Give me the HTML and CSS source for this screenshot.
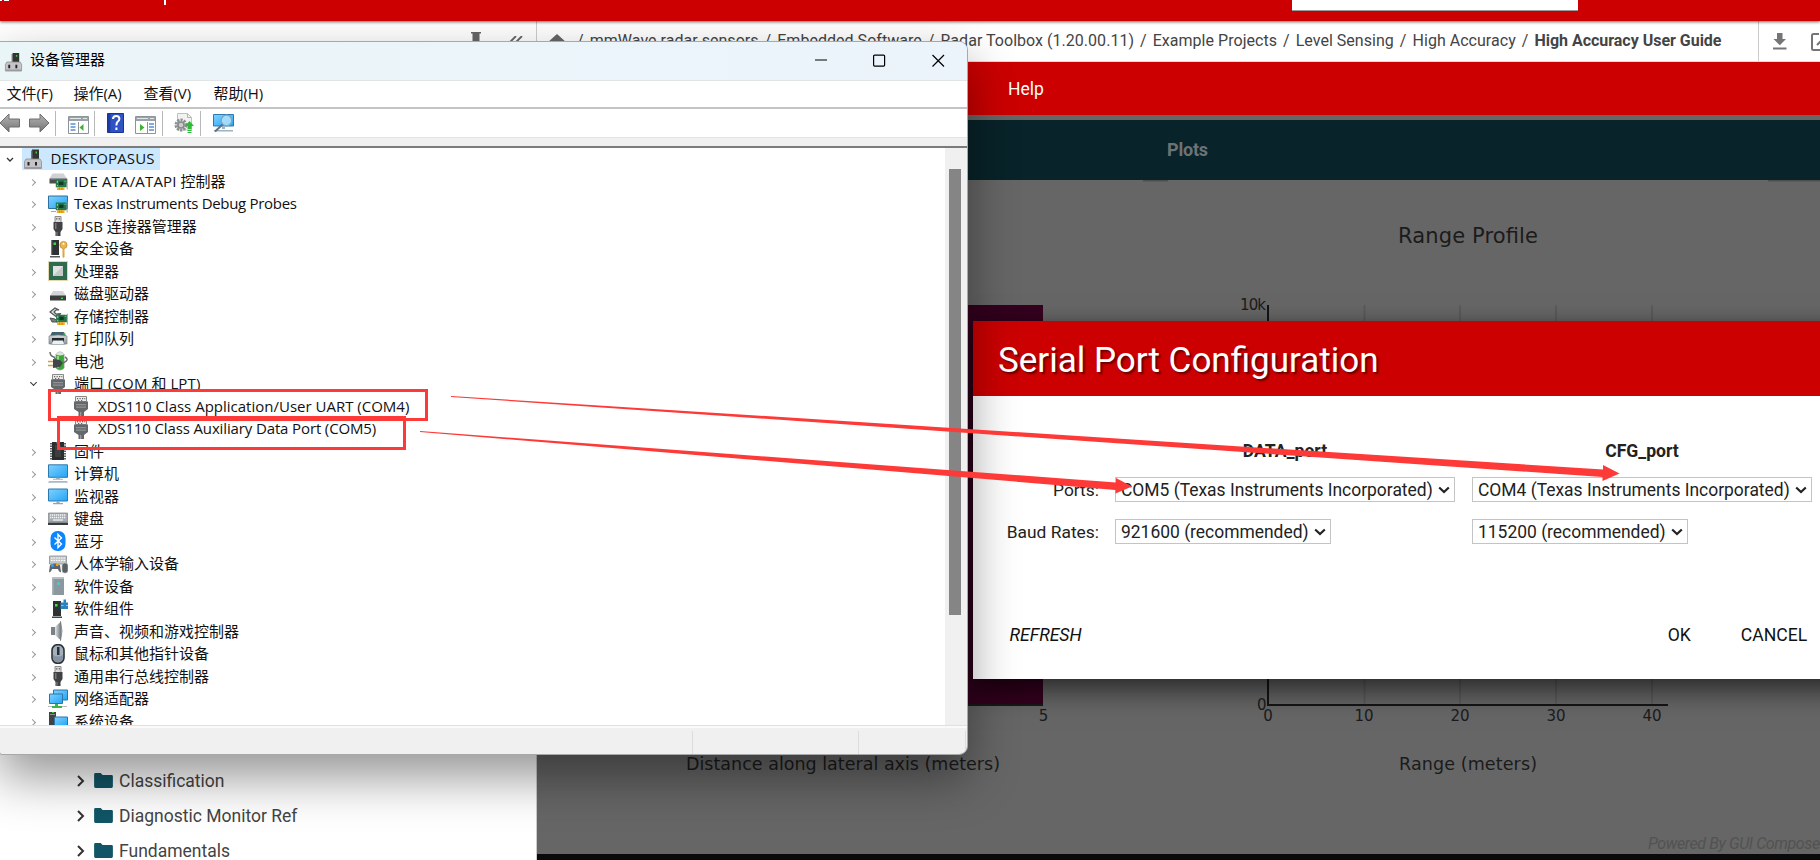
FILE: index.html
```html
<!DOCTYPE html>
<html lang="zh-CN">
<head>
<meta charset="utf-8">
<title>High Accuracy User Guide</title>
<link rel="stylesheet" href="styles.css">
</head>
<body>
<svg class="defs" width="0" height="0" aria-hidden="true">
  <defs>
    <linearGradient id="gScreen" x1="0" y1="0" x2="1" y2="1"><stop offset="0" stop-color="#7fd2ff"/><stop offset="1" stop-color="#22a4f5"/></linearGradient>
    <linearGradient id="gSteel" x1="0" y1="0" x2="1" y2="0"><stop offset="0" stop-color="#e4e8ea"/><stop offset="1" stop-color="#6d7478"/></linearGradient>
    <linearGradient id="gGrey" x1="0" y1="0" x2="0" y2="1"><stop offset="0" stop-color="#d9dcde"/><stop offset="1" stop-color="#8d9396"/></linearGradient>
    <linearGradient id="gArrow" x1="0" y1="0" x2="0" y2="1"><stop offset="0" stop-color="#b5b5b5"/><stop offset="1" stop-color="#747474"/></linearGradient>
  </defs>
  <symbol id="pc" viewBox="0 0 20 20"><path d="M9 .500h7v11H9z" fill="#333"/><path d="M8 1.500h1.500v9H8z" fill="#777"/><path d="M12.500 2.500h1.500v2h-1.500z" fill="#36d23a"/><path d="M3 10h14l1.500 2.500v7h-17v-7z" fill="#c4c4c8" stroke="#8d8d91" stroke-width=".8"/><path d="M4.500 13h2v3.500h-2zM12 13h2v3.500h-2z" fill="#222"/><path d="M2 18h16v1.500H2z" fill="#9a9a9f"/></symbol>
  <symbol id="card" viewBox="0 0 12 11"><path d="M1 1h10v7H1z" fill="#27764a"/><path d="M4 3h4v3H4z" fill="#123b26"/><path d="M2 2h1v2H2zM9 2h1v1H9zM2 6h1v1H2z" fill="#8ad29e"/><path d="M2 8h7v2.500H2z" fill="#f5ad19"/><path d="M4.300 8v2.500M6.600 8v2.500" stroke="#b97800" stroke-width=".6"/><path d="M11 0h.8v10H11z" fill="#999"/></symbol>
  <symbol id="ide" viewBox="0 0 20 20"><path d="M4.500 2.500h11l3.500 5H1.500z" fill="#cfd2d4"/><path d="M1.500 7.500H19v5H1.500z" fill="#4b4e50"/><path d="M2.500 7.500h15v1h-15z" fill="#8c8f91"/><use href="#card" x="6.500" y="7.500" width="13.500" height="12"/></symbol>
  <symbol id="probe" viewBox="0 0 20 20"><path d="M.5 2h19v12.500H.5z" fill="url(#gScreen)" stroke="#2f6fa0"/><path d="M3 17h5v1H3z" fill="#9ab"/><use href="#card" x="6.500" y="7.500" width="13.500" height="12"/></symbol>
  <symbol id="usb" viewBox="0 0 20 20"><path d="M7 .5h6v6H7z" fill="#d9d9d9" stroke="#8a8a8a"/><path d="M8.300 2h1v1.500h-1zM10.800 2h1v1.500h-1z" fill="#555"/><path d="M5.500 6h9v7l-2 3v4h-5v-4l-2-3z" fill="#3f4143"/><path d="M7 7h1.500v6H7z" fill="#77797b"/><path d="M8.500 16h1v4h-1z" fill="#888"/></symbol>
  <symbol id="security" viewBox="0 0 20 20"><path d="M3 1h8v15H3z" fill="#2f3234"/><path d="M3 1h1.200v15H3z" fill="#74787a"/><path d="M2 17h10v1.500H2z" fill="#55595b"/><path d="M5.500 3.500h2.500V6H5.500z" fill="#3bd93e"/><circle cx="15.500" cy="6" r="3.600" fill="#e9b652" stroke="#b98624" stroke-width=".7"/><circle cx="15.500" cy="4.800" r="1" fill="#fff"/><path d="M14.500 9h2v9l-1 1-1-1z" fill="#dca740"/></symbol>
  <symbol id="cpu" viewBox="0 0 20 20"><path d="M.5.500h19v19H.5z" fill="none" stroke="#c8b05c" stroke-width="1" stroke-dasharray="1 1"/><path d="M1 1h18v18H1z" fill="#2f6b4c"/><path d="M5 5h10v10H5z" fill="#dfe3e1"/><path d="M15 5v10H5z" fill="#c3cac7"/></symbol>
  <symbol id="disk" viewBox="0 0 20 20"><path d="M5 7h10l3 5H2z" fill="#d3d5d7"/><path d="M2 11.500h16v5H2z" fill="#3b3d3f"/><path d="M13 13.500h2v1.500h-2z" fill="#37d63b"/></symbol>
  <symbol id="storage" viewBox="0 0 20 20"><path d="M2 6l5-4 4 2-3 0-2 2 2 2 5-.5-5 3z" fill="#dfe2e3" stroke="#505456" stroke-width="1.200"/><path d="M2 12l5 1 3 3H4z" fill="#777c7e" stroke="#505456"/><use href="#card" x="7" y="7.500" width="13" height="12"/></symbol>
  <symbol id="printer" viewBox="0 0 20 20"><path d="M4 3h12l2 4H2z" fill="#40626e"/><path d="M1 7q9-2 18 0v8H1z" fill="url(#gGrey)" stroke="#7e8487" stroke-width=".7"/><path d="M4 9h12v4H4z" fill="#25282a"/><path d="M5 11.500h10l1.500 4h-13z" fill="#e8f2f6" stroke="#80888b" stroke-width=".5"/><path d="M15.500 4h2v1.500h-2z" fill="#35dd49"/></symbol>
  <symbol id="battery" viewBox="0 0 20 20"><path d="M8 3q4-4 8 0v14q-4 4-8 0z" fill="#37a836" stroke="#8b918b" stroke-width=".8"/><ellipse cx="12" cy="2.800" rx="4" ry="1.700" fill="#dce3dc"/><path d="M9 5h2v12H9z" fill="#8ae27d"/><path d="M2 1q0 4 4 5l2 3M17 6q5 3-2 6" fill="none" stroke="#6b6e70" stroke-width="1.500"/><path d="M5 8l7 1 3 3-3 4-7 1z" fill="#434648"/><path d="M0 10.500h5M0 14.500h5" stroke="#c9a24a" stroke-width="1.500"/></symbol>
  <symbol id="port" viewBox="0 0 20 20"><path d="M4.500.500h11v5h-11z" fill="#ececec" stroke="#888"/><path d="M6 2h1.200v1.200H6zM8.500 2h1.200v1.200H8.500zM11 2h1.200v1.200H11zM13.300 2h1v1.200h-1zM7 4h1.200v1H7zM10 4h1.200v1H10z" fill="#666"/><path d="M3 5.500h14V13l-4 3v4H7.500v-4L3 13z" fill="#65686a"/><path d="M5 8h10v1.200H5zM5 10.500h10v1.200H5z" fill="#8f9294"/><path d="M9 16h1.300v4H9z" fill="#999"/></symbol>
  <symbol id="firmware" viewBox="0 0 20 20"><path d="M3.500 2v17M16.500 2v17" stroke="#606366" stroke-width="3" stroke-dasharray="1.500 1"/><path d="M4 1h12v18H4z" fill="#2b2d2f"/><path d="M7 4h6v12H7z" fill="#3c3f41"/><path d="M8.500 1h3v1.500h-3z" fill="#999"/></symbol>
  <symbol id="computer" viewBox="0 0 20 20"><path d="M.5.800h19v12.500H.5z" fill="url(#gScreen)" stroke="#2f78ad"/><path d="M8 13.800h4v1H8zM5 14.800h10v1H5z" fill="#9fb2c0"/><path d="M1 17h18l1 1.800H0z" fill="#a9b8c4"/></symbol>
  <symbol id="monitor" viewBox="0 0 20 20"><path d="M.5 3h19v12H.5z" fill="url(#gScreen)" stroke="#2f78ad"/><path d="M8.500 15.500h3v1.500h-3zM5 17h10v1.200H5z" fill="#8fa6b7"/></symbol>
  <symbol id="keyboard" viewBox="0 0 20 20"><path d="M.5 4h19v9H.5z" fill="#a7adb2" stroke="#7d8387" stroke-width=".7"/><path d="M2 6h16M2 8.500h16" stroke="#f3f5f6" stroke-width="1.300" stroke-dasharray="1.300 .7"/><path d="M5 11h10" stroke="#f3f5f6" stroke-width="1.200"/><path d="M0 13.500h20V16H0z" fill="#363c40"/></symbol>
  <symbol id="bluetooth" viewBox="0 0 20 20"><rect x="2.500" y="0" width="15" height="20" rx="7" fill="#0a84ff"/><path d="M6.500 6.500l7 6.500-3.500 3.500v-13L13.500 7l-7 6.500" fill="none" stroke="#fff" stroke-width="1.400"/></symbol>
  <symbol id="hid" viewBox="0 0 20 20"><path d="M1.500 2h17v8h-17z" fill="#c3c8cb" stroke="#858b8f" stroke-width=".8"/><path d="M3 4h14M3 6.500h14" stroke="#fff" stroke-width="1.200" stroke-dasharray="1.500 1"/><path d="M1 18l1-7q5-3 10 0l1 7q-2 1-3-3H4q-1 4-3 3z" fill="#5d6468"/><circle cx="4.500" cy="11.500" r="1.500" fill="#359ff1"/><circle cx="9.200" cy="10.800" r="1.400" fill="#f6a321"/><rect x="14" y="9" width="6" height="10" rx="2.800" fill="#596065" stroke="#b8bec2" stroke-width=".7"/></symbol>
  <symbol id="softdev" viewBox="0 0 20 20"><path d="M5 1h10l1 1v17H4V2z" fill="#8c989f"/><path d="M5 1h10l1 2H4z" fill="#b7c0c4"/><path d="M4 3h1.500v16H4z" fill="#a9b3b8"/><path d="M9 6.500h3V9H9z" fill="#38d0dc"/></symbol>
  <symbol id="softcomp" viewBox="0 0 20 20"><path d="M5 2h8v15H5z" fill="#2f3234"/><path d="M4 17.500h10V19H4z" fill="#444749"/><path d="M7 5h2.500v2.500H7z" fill="#42e03f"/><path d="M12.500 3.500h7.500v2.500h-7.500zM12.500 6.500h7.500v3.500h-7.500zM15.500.500h2.500v9h-2.500z" fill="#2b83bd"/></symbol>
  <symbol id="sound" viewBox="0 0 20 20"><path d="M3 6h4v8H3z" fill="#7b8185"/><path d="M7 6l6-5.500v19L7 14z" fill="url(#gSteel)"/><path d="M12.500.500q3 9.500 0 19z" fill="#b8bec2" stroke="#757c80" stroke-width=".8"/></symbol>
  <symbol id="mouse" viewBox="0 0 20 20"><rect x="4" y=".7" width="12" height="18.600" rx="5.500" fill="#a3afbd" stroke="#2e3336" stroke-width="1.600"/><path d="M9 3h2.500v8H9z" fill="#2b3033"/><path d="M5 11q5 3 10 0v3q-1 4-5 4t-5-4z" fill="#8492a3"/></symbol>
  <symbol id="network" viewBox="0 0 20 20"><path d="M5.500 1h14v10h-14z" fill="url(#gScreen)" stroke="#2c75aa"/><path d="M1.500 5h13v9.500h-13z" fill="url(#gScreen)" stroke="#2c75aa"/><path d="M7 15h3v2h4v2H4v-2h3z" fill="#39b54a"/><path d="M0 17h4v1H0zM14 17h5v1h-5z" fill="#bbb"/></symbol>
  <symbol id="system" viewBox="0 0 20 20"><path d="M1 1h7v14H1z" fill="#3f4345"/><path d="M2 3h5v1H2z" fill="#8a9092"/><path d="M4 1h2v1H4z" fill="#3c3"/><path d="M6.500 6h13v9h-13z" fill="url(#gScreen)" stroke="#2c75aa"/></symbol>
  <symbol id="folder" viewBox="0 0 20 16"><path d="M1.500 0H7l2 2h9.500q1.500 0 1.500 1.500v11q0 1.500-1.500 1.500h-17Q0 16 0 14.500v-13Q0 0 1.500 0z" fill="#115566"/></symbol>
</svg>

<div class="page">
  <header class="topbar">
    <span class="mark mark-a"></span><span class="mark mark-b"></span><span class="mark mark-c"></span>
    <div class="search"></div>
  </header>
  <div class="crumbbar">
    <div class="sidetools">
      <svg width="12" height="20" viewBox="0 0 12 20"><path d="M1 0h10v1.500H9.500V10L12 13H0l2.500-3V1.500H1z" fill="#666"/></svg>
      <svg class="collapse" width="14" height="14" viewBox="0 0 14 14"><path d="M7 0L1 6l6 6M13 0L7 6l6 6" fill="none" stroke="#666" stroke-width="1.800"/></svg>
    </div>
    <nav class="crumbs">
      <svg class="home" width="20" height="17" viewBox="0 0 20 17"><path d="M10 0L0 9h3v8h5v-6h4v6h5V9h3z" fill="#666"/></svg>
      <i>/</i><span>mmWave radar sensors</span><i>/</i><span>Embedded Software</span><i>/</i><span>Radar Toolbox (1.20.00.11)</span><i>/</i><span>Example Projects</span><i>/</i><span>Level Sensing</span><i>/</i><span>High Accuracy</span><i>/</i><b>High Accuracy User Guide</b>
    </nav>
    <div class="pagetools">
      <svg width="14" height="17" viewBox="0 0 14 17"><path d="M4 0h5.500v6H13l-6.200 6.200L.5 6H4zM0 14.500h13.500v2H0z" fill="#757575"/></svg>
      <svg width="18" height="18" viewBox="0 0 18 18"><path d="M8 1H2.500Q1 1 1 2.500v13Q1 17 2.500 17h13M6 12L16 2M11 1h6v6" fill="none" stroke="#757575" stroke-width="2"/></svg>
    </div>
  </div>
  <div class="content">
    <aside class="sidebar">
      <div class="nav"><svg width="8" height="12" viewBox="0 0 8 12"><path d="M1 1l5 5-5 5" fill="none" stroke="#333" stroke-width="2"/></svg><svg width="19" height="15"><use href="#folder"/></svg>Classification</div>
      <div class="nav"><svg width="8" height="12" viewBox="0 0 8 12"><path d="M1 1l5 5-5 5" fill="none" stroke="#333" stroke-width="2"/></svg><svg width="19" height="15"><use href="#folder"/></svg>Diagnostic Monitor Ref</div>
      <div class="nav"><svg width="8" height="12" viewBox="0 0 8 12"><path d="M1 1l5 5-5 5" fill="none" stroke="#333" stroke-width="2"/></svg><svg width="19" height="15"><use href="#folder"/></svg>Fundamentals</div>
    </aside>
    <main class="app">
      <div class="appmenu">Help</div>
      <div class="tabs"><span>Plots</span></div>
      <svg class="plots" width="1283" height="674" viewBox="537 180 1283 674">
        <path d="M1143 180h25v1.500h-25zM1768 180h52v1.500h-52z" fill="#4e4e4e"/>
        <rect x="600" y="305" width="443" height="399" fill="#35001f"/>
        <path d="M600 704h443v2H600z" fill="#191919"/>
        <path d="M1364.500 305v399M1460 305v399M1556 305v399M1652 305v399" stroke="#5b5b5b" stroke-width="2"/>
        <path d="M1268 305v400h400" fill="none" stroke="#151515" stroke-width="2"/>
        <g class="ticks">
          <text x="1043.500" y="721" text-anchor="middle">5</text>
          <text x="1266" y="309.500" text-anchor="end" textLength="26">10k</text>
          <text x="1266.500" y="709.500" text-anchor="end">0</text>
          <text x="1268" y="721" text-anchor="middle">0</text>
          <text x="1364" y="721" text-anchor="middle">10</text>
          <text x="1460" y="721" text-anchor="middle">20</text>
          <text x="1556" y="721" text-anchor="middle">30</text>
          <text x="1652" y="721" text-anchor="middle">40</text>
        </g>
        <text class="ptitle" x="1398" y="242.500" textLength="140">Range Profile</text>
        <text class="axis" x="686" y="770" textLength="314">Distance along lateral axis (meters)</text>
        <text class="axis" x="1399" y="770" textLength="138">Range (meters)</text>
        <text class="powered" x="1648" y="849" textLength="177">Powered By GUI Composer</text>
      </svg>
    </main>
  </div>
</div>

<section class="dialog">
  <h1>Serial Port Configuration</h1>
  <div class="form">
    <span></span><b>DATA_port</b><b>CFG_port</b>
    <label>Ports:</label>
    <div class="select wide">COM5 (Texas Instruments Incorporated)<svg width="12" height="8" viewBox="0 0 12 8"><path d="M1.200 1.500L6 6l4.800-4.500" fill="none" stroke="#222" stroke-width="2.200"/></svg></div>
    <div class="select wide">COM4 (Texas Instruments Incorporated)<svg width="12" height="8" viewBox="0 0 12 8"><path d="M1.200 1.500L6 6l4.800-4.500" fill="none" stroke="#222" stroke-width="2.200"/></svg></div>
    <label>Baud Rates:</label>
    <div class="select">921600 (recommended)<svg width="12" height="8" viewBox="0 0 12 8"><path d="M1.200 1.500L6 6l4.800-4.500" fill="none" stroke="#222" stroke-width="2.200"/></svg></div>
    <div class="select">115200 (recommended)<svg width="12" height="8" viewBox="0 0 12 8"><path d="M1.200 1.500L6 6l4.800-4.500" fill="none" stroke="#222" stroke-width="2.200"/></svg></div>
  </div>
  <div class="actions"><em>REFRESH</em><span class="ok">OK</span><span class="cancel">CANCEL</span></div>
</section>

<section class="window">
  <div class="titlebar">
    <svg class="ticon" width="19" height="20"><use href="#pc"/></svg><span class="tname">设备管理器</span>
    <svg class="controls" width="130" height="14" viewBox="0 0 130 14"><path d="M0 6h12" stroke="#000" stroke-width="1.200"/><rect x="58.600" y="1.100" width="11" height="11" rx="1" fill="none" stroke="#000" stroke-width="1.200"/><path d="M117.500 1l11.500 11.500M129 1l-11.500 11.500" stroke="#000" stroke-width="1.200"/></svg>
  </div>
  <div class="menubar"><span>文件(F)</span><span>操作(A)</span><span>查看(V)</span><span>帮助(H)</span></div>
  <div class="toolbar">
    <svg width="20" height="20" viewBox="0 0 20 20"><path d="M0 10L9 1v5h10.500v8H9v5z" fill="url(#gArrow)" stroke="#6e6e6e"/></svg>
    <svg class="fwd" width="20" height="20" viewBox="0 0 20 20"><path d="M20 10L11 1v5H.5v8H11v5z" fill="url(#gArrow)" stroke="#6e6e6e"/></svg>
    <i class="sep s1"></i>
    <svg class="b1" width="21" height="18" viewBox="0 0 21 18"><path d="M.5.500h20v17H.5z" fill="#fff" stroke="#8c949a"/><path d="M1 1h19v4H1z" fill="#9aa3aa"/><path d="M2 2.500h11M15 2.500h4" stroke="#dfe4e7"/><path d="M10.500 6v11" stroke="#8c949a"/><path d="M2.500 8h5M2.500 11h5M2.500 14h5" stroke="#5a8fd0" stroke-width="1.500"/><path d="M15.500 8v7L11.500 11.500z" fill="#3ab52d"/></svg>
    <i class="sep s2"></i>
    <svg class="b2" width="17" height="20" viewBox="0 0 17 20"><path d="M.5.500h16v19H.5z" fill="#2f52c4" stroke="#1b348c"/><path d="M1 1h2.500v18H1z" fill="#1e3ca5"/><path d="M6 6q0-3 3.200-3t3.200 2.800q0 1.700-1.800 3Q9.400 10 9.400 12.500M9.400 14.500V17" fill="none" stroke="#fff" stroke-width="2"/></svg>
    <svg class="b3" width="21" height="18" viewBox="0 0 21 18"><path d="M.5.500h20v17H.5z" fill="#fff" stroke="#8c949a"/><path d="M1 1h19v4H1z" fill="#9aa3aa"/><path d="M2 2.500h11M15 2.500h4" stroke="#dfe4e7"/><path d="M12.500 6v11" stroke="#8c949a"/><path d="M14 8h5M14 11h5M14 14h5" stroke="#5a8fd0" stroke-width="1.500"/><path d="M5 8v7l4.500-3.500z" fill="#3ab52d"/></svg>
    <i class="sep s3"></i>
    <svg class="b4" width="20" height="20" viewBox="0 0 20 20"><path d="M3.500.500h10l4 4V17h-14z" fill="#f2f2f2" stroke="#c0c0c0"/><path d="M13.500.500v4h4" fill="none" stroke="#b5b5b5"/><circle cx="7" cy="12" r="5" fill="none" stroke="#8d9192" stroke-width="3" stroke-dasharray="2.200 1"/><circle cx="7" cy="12" r="3" fill="#ccc" stroke="#85898a" stroke-width="1.500"/><path d="M15.500 8l4.500 5h-2.500v3h-4v-3H11zM13.500 17h4v1h-4zM13.500 19h4v1h-4z" fill="#2dbb35"/></svg>
    <i class="sep s4"></i>
    <svg class="b5" width="21" height="20" viewBox="0 0 21 20"><path d="M.5 1.500h20V13H.5z" fill="url(#gScreen)" stroke="#2f78ad"/><path d="M9 14h3v2H9zM1 17h19v1.500H1z" fill="#9fb2c0"/><circle cx="13.500" cy="7.500" r="5.300" fill="#bde8ff" fill-opacity=".75" stroke="#7fa6bf" stroke-width="1.300"/><path d="M9.500 11.500L2 18.500" stroke="#5d7385" stroke-width="2"/></svg>
  </div>
  <div class="strip"></div>
  <div class="pane">
    <div class="tree">
      <div class="row root"><svg class="ch" viewBox="0 0 8 8"><path d="M1 2l3 3 3-3" fill="none" stroke="#333" stroke-width="1.300"/></svg><span class="sel"><svg class="ic"><use href="#pc"/></svg><span class="lat wide">DESKTOPASUS</span></span></div>
      <div class="row"><u></u><svg class="ic"><use href="#ide"/></svg><span class="lat wide">IDE ATA/ATAPI</span>&nbsp;控制器</div>
      <div class="row"><u></u><svg class="ic"><use href="#probe"/></svg><span class="lat tight">Texas Instruments Debug Probes</span></div>
      <div class="row"><u></u><svg class="ic"><use href="#usb"/></svg><span class="lat">USB</span>&nbsp;连接器管理器</div>
      <div class="row"><u></u><svg class="ic"><use href="#security"/></svg>安全设备</div>
      <div class="row"><u></u><svg class="ic"><use href="#cpu"/></svg>处理器</div>
      <div class="row"><u></u><svg class="ic"><use href="#disk"/></svg>磁盘驱动器</div>
      <div class="row"><u></u><svg class="ic"><use href="#storage"/></svg>存储控制器</div>
      <div class="row"><u></u><svg class="ic"><use href="#printer"/></svg>打印队列</div>
      <div class="row"><u></u><svg class="ic"><use href="#battery"/></svg>电池</div>
      <div class="row"><u class="open"></u><svg class="ic"><use href="#port"/></svg>端口&nbsp;<span class="lat wide">(COM</span>&nbsp;和&nbsp;<span class="lat wide">LPT)</span></div>
      <div class="row child"><svg class="ic"><use href="#port"/></svg><span class="lat">XDS110 Class Application/User UART (COM4)</span></div>
      <div class="row child"><svg class="ic"><use href="#port"/></svg><span class="lat snug">XDS110 Class Auxiliary Data Port (COM5)</span></div>
      <div class="row"><u></u><svg class="ic"><use href="#firmware"/></svg>固件</div>
      <div class="row"><u></u><svg class="ic"><use href="#computer"/></svg>计算机</div>
      <div class="row"><u></u><svg class="ic"><use href="#monitor"/></svg>监视器</div>
      <div class="row"><u></u><svg class="ic"><use href="#keyboard"/></svg>键盘</div>
      <div class="row"><u></u><svg class="ic"><use href="#bluetooth"/></svg>蓝牙</div>
      <div class="row"><u></u><svg class="ic"><use href="#hid"/></svg>人体学输入设备</div>
      <div class="row"><u></u><svg class="ic"><use href="#softdev"/></svg>软件设备</div>
      <div class="row"><u></u><svg class="ic"><use href="#softcomp"/></svg>软件组件</div>
      <div class="row"><u></u><svg class="ic"><use href="#sound"/></svg>声音、视频和游戏控制器</div>
      <div class="row"><u></u><svg class="ic"><use href="#mouse"/></svg>鼠标和其他指针设备</div>
      <div class="row"><u></u><svg class="ic"><use href="#usb"/></svg>通用串行总线控制器</div>
      <div class="row"><u></u><svg class="ic"><use href="#network"/></svg>网络适配器</div>
      <div class="row"><u></u><svg class="ic"><use href="#system"/></svg>系统设备</div>
    </div>
    <div class="scroll"><div class="thumb"></div></div>
  </div>
  <div class="status"><i></i><i></i><i></i></div>
</section>

<svg class="notes" width="1820" height="860" viewBox="0 0 1820 860">
  <g fill="none" stroke="#fd3a37" stroke-width="3"><rect x="49.500" y="390.500" width="377" height="29"/><rect x="58.500" y="417.500" width="346" height="31"/></g>
  <path d="M451 396L1603 469.500V465L1619.500 473.500 1602.500 481V477L451 397z" fill="#fd3a37"/>
  <path d="M420 431L1116 482.500V478L1132 486.500 1115.500 493.500V490L420 432z" fill="#fd3a37"/>
</svg>
</body>
</html>
```

FILE: styles.css
```css
* { box-sizing: border-box; }
body { margin: 0; width: 1820px; height: 860px; overflow: hidden; position: relative; background: #fff; font-family: Roboto, "Noto Sans CJK SC", sans-serif; color: #333; }
svg { display: block; flex: none; }
.defs { position: absolute; }
i { font-style: normal; }

.page { width: 1820px; height: 860px; display: flex; flex-direction: column; }
.topbar { height: 21px; flex: none; background: #c00; position: relative; z-index: 1; box-shadow: 0 1px 3px rgba(0,0,0,.6); padding-left: 1292px; }
.search { width: 286px; height: 11px; background: #fff; border-bottom: 1px solid #999; }
.mark { position: absolute; top: 0; background: #fff; }
.mark-a { left: 0; width: 2px; height: 1px; }
.mark-b { left: 4px; width: 5px; height: 1px; }
.mark-c { left: 164px; width: 2px; height: 5px; }
.crumbbar { height: 41px; flex: none; display: flex; border-bottom: 1px solid #ddd; background: #fff; }
.sidetools { width: 537px; border-right: 1px solid #ccc; padding: 11px 0 0 470px; display: flex; }
.collapse { margin: 4px 0 0 27px; }
.crumbs { width: 1222px; border-right: 1px solid #ccc; display: flex; align-items: center; font-size: 16px; color: #444; white-space: nowrap; padding: 0 0 2px 10px; letter-spacing: .03px; }
.crumbs i { width: 18.700px; text-align: center; }
.crumbs .home { margin: 4px 4px 0 0; }
.crumbs b { font-weight: 700; letter-spacing: -.02px; }
.pagetools { display: flex; padding: 12px 0 0 14px; gap: 24px; overflow: hidden; flex: 1; }
.content { flex: 1; display: flex; min-height: 0; }
.sidebar { width: 537px; flex: none; border-right: 1px solid #ccc; padding-top: 701px; overflow: hidden; }
.nav { height: 35px; display: flex; align-items: center; font-size: 17.500px; color: #444; padding-left: 77px; }
.nav svg + svg { margin: 0 6px 0 9px; }
.app { flex: 1; background: #666; border-bottom: 6px solid #0a0a0a; overflow: hidden; }
.appmenu { height: 53px; background: #c00; color: #fff; font-size: 17.500px; line-height: 54px; padding-left: 471px; }
.tabs { height: 60px; margin-top: 5px; background: #082329; line-height: 60px; padding-left: 630px; font-size: 18px; font-weight: 700; color: #6d7375; letter-spacing: -.2px; }
.plots text { font-family: "DejaVu Sans", sans-serif; fill: #1b1b1b; }
.plots .ticks text { font-size: 15px; }
.plots .ptitle { font-size: 21px; }
.plots .axis { font-size: 17.500px; }
.plots .powered { font-family: Roboto, sans-serif; font-style: italic; font-size: 16px; fill: #525252; }

.dialog { position: absolute; left: 973px; top: 321px; width: 920px; height: 358px; background: #fff; box-shadow: 0 12px 26px rgba(0,0,0,.55), 0 0 14px rgba(0,0,0,.15); color: #222; }
.dialog h1 { margin: 0; height: 75px; background: #c00; color: #fff; font-size: 35px; font-weight: 400; line-height: 80px; padding-left: 25px; text-shadow: 2px 2px 2px rgba(0,0,0,.5); white-space: nowrap; }
.form { display: grid; grid-template-columns: 127px 340px 340px; grid-template-rows: 20px 25px 25px; gap: 17px; padding-top: 44px; margin-left: -2px; font-size: 17.600px; line-height: 20px; }
.form b { text-align: center; line-height: 22px; }
.form label { text-align: right; line-height: 26px; font-size: 17.400px; margin-right: -1px; }
.select { width: 216px; height: 25px; border: 1px solid #c4c4c4; padding-left: 5px; display: flex; align-items: center; gap: 5px; white-space: nowrap; font-size: 17.450px; }
.select.wide { width: 340px; }
.actions { display: flex; align-items: center; font-size: 17.600px; padding: 80px 0 0 36.500px; line-height: 22px; color: #111; }
.ok { margin-left: 586px; }
.cancel { margin-left: 50px; }

.window { position: absolute; left: -1px; top: 41px; width: 969px; height: 714px; border: 1px solid #a6a8a9; border-radius: 0 9px 9px 3px; overflow: hidden; background: #f0f0f0; display: flex; flex-direction: column; font: 15px/22px "Open Sans", "Noto Sans CJK SC", sans-serif; color: #111; box-shadow: 0 22px 50px rgba(0,0,0,.42); }
.titlebar { height: 39px; flex: none; display: flex; align-items: center; background: linear-gradient(90deg,#eaf5f8,#ecf4fb); border-bottom: 1px solid #e2e5e6; }
.ticon { margin: 1px 7px 0 4px; }
.tname { color: #000; line-height: 20px; margin-top: -4px; }
.controls { margin: 0 0 0 710px; }
.menubar { height: 28px; flex: none; display: flex; background: #fff; border-bottom: 2px solid #c4c4c6; padding-left: 6.500px; line-height: 24px; letter-spacing: -.05px; }
.menubar span { width: 70px; }
.menubar span:first-child { width: 67px; }
.toolbar { height: 29px; flex: none; background: #fff; display: flex; align-items: center; border-bottom: 1px solid #e4e4e4; }
.fwd { margin-left: 9px; }
.sep { width: 1px; height: 25px; background: #b8b8b8; }
.s1 { margin-left: 6px; }
.s2 { margin-left: 5px; }
.s3 { margin-left: 6px; }
.s4 { margin-left: 6px; }
.b1 { margin: 3px 0 0 11.500px; }
.b2 { margin-left: 12.500px; }
.b3 { margin: 3px 0 0 10.500px; }
.b4 { margin-left: 11.500px; }
.b5 { margin-left: 11.500px; }
.strip { height: 10px; flex: none; border-bottom: 2px solid #7b7b7b; background: #f0f0f0; }
.pane { height: 577px; flex: none; display: flex; overflow: hidden; background: #fff; }
.tree { flex: 1; margin-top: -1px; }
.row { height: 22.500px; display: flex; align-items: center; padding-left: 31px; white-space: nowrap; line-height: 22px; }
.row u { width: 5px; height: 5px; border: solid #999; border-width: 1.300px 1.300px 0 0; transform: translateX(-1px) rotate(45deg); margin: 3px 12px 0 0; }
.row u.open { border-color: #333; transform: translateY(-2px) rotate(135deg); }
.ic { width: 20px; height: 20px; margin: 1px 6px 0 0; }
.row.child { padding-left: 71px; }
.row.child .ic { margin-right: 7px; }
.row.root { padding-left: 6px; }
.ch { width: 8px; height: 8px; margin: 4px 8px 0 0; }
.sel { display: flex; align-items: center; background: #cce8ff; height: 22px; width: 138px; padding-left: 1px; margin-top: 2px; }
.sel .ic { margin: 0 7.500px 0 0; }
.sel .lat { margin-top: -3px; }
.lat.wide { letter-spacing: .16px; }
.lat.tight { letter-spacing: -.3px; }
.lat.snug { letter-spacing: -.13px; }
.scroll { width: 22px; background: #f0f0f0; padding: 21px 0 0 4px; }
.thumb { width: 12px; height: 446px; background: #858585; }
.status { flex: 1; border-top: 1px solid #e0e0e0; box-shadow: inset 0 2px 0 #fafafa; display: flex; padding-top: 5px; }
.status i { border-right: 1px solid #dcdcdc; width: 107px; }
.status i:first-child { width: 693px; }
.status i:nth-child(2) { width: 166px; }

.notes { position: absolute; left: 0; top: 0; }
```
